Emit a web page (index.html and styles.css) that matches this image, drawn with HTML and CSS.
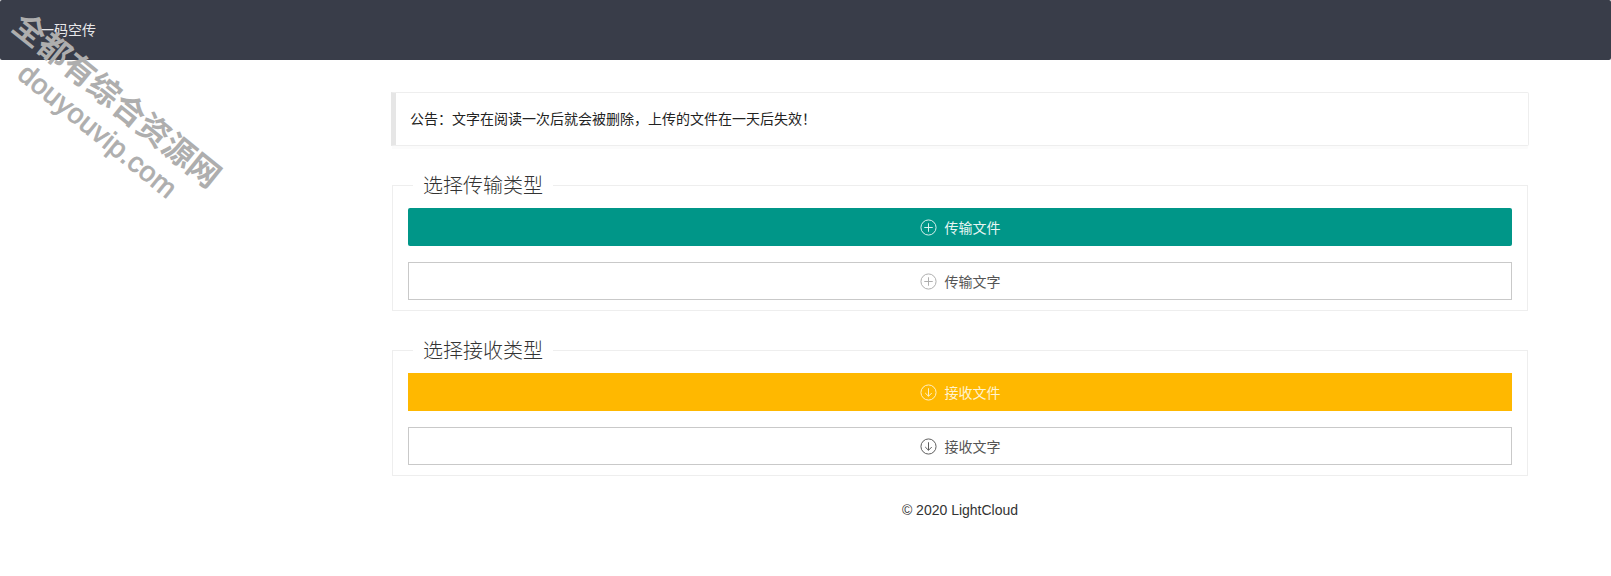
FILE: index.html
```html
<!DOCTYPE html>
<html lang="zh-CN">
    <head>
        <meta charset="utf-8">
        <title>一码空传</title>
        <link rel="stylesheet" href="styles.css">
    </head>
    <body>
    <div class="header">一码空传</div>
    <div class="main">
        <div class="notice">公告：文字在阅读一次后就会被删除，上传的文件在一天后失效！</div>
        <fieldset class="field">
            <legend>选择传输类型</legend>
            <div class="field-box">
                <button class="btn btn-green">
                    <svg class="icon" viewBox="0 0 18 18"><circle cx="9" cy="9" r="8"/><path d="M9 4.5v9M4.5 9h9"/></svg>
                    传输文件
                </button>
                <button class="btn btn-plain btn-faint">
                    <svg class="icon" viewBox="0 0 18 18"><circle cx="9" cy="9" r="8"/><path d="M9 4.5v9M4.5 9h9"/></svg>
                    传输文字
                </button>
            </div>
        </fieldset>
        <fieldset class="field">
            <legend>选择接收类型</legend>
            <div class="field-box">
                <button class="btn btn-yellow">
                    <svg class="icon" viewBox="0 0 18 18"><circle cx="9" cy="9" r="8"/><path d="M9 4.5v8.5M5.5 9.5 9 13l3.5-3.5"/></svg>
                    接收文件
                </button>
                <button class="btn btn-plain">
                    <svg class="icon" viewBox="0 0 18 18"><circle cx="9" cy="9" r="8"/><path d="M9 4.5v8.5M5.5 9.5 9 13l3.5-3.5"/></svg>
                    接收文字
                </button>
            </div>
        </fieldset>
        <div class="footer">© 2020 LightCloud</div>
    </div>
    <div class="watermark">
        <div class="mark-name">全都有综合资源网</div>
        <div class="mark-url">douyouvip.com</div>
    </div>
    </body>
</html>
```

FILE: styles.css
```css
body {
    margin: 0;
    background-color: #fff;
    color: #333;
    font-family: "Liberation Sans", "Noto Sans CJK SC", sans-serif;
    font-size: 14px;
}
.header {
    height: 60px;
    padding-left: 40px;
    background-color: #393d49;
    border-radius: 2px;
    color: #e8e8ea;
    line-height: 60px;
}
.main {
    width: 1138px;
    margin-left: 391px;
    padding-top: 32px;
}
.notice {
    height: 54px;
    box-sizing: border-box;
    padding-left: 14px;
    border: 1px solid #eee;
    border-left: 5px solid #e6e6e6;
    border-radius: 0 2px 2px 0;
    box-shadow: 0 4px 0 -1px #fbfbfb;
    color: #222;
    line-height: 52px;
    margin-bottom: 28px;
}
.field {
    width: 1136px;
    box-sizing: border-box;
    margin: 0 0 0 1px;
    padding: 0;
    border: 1px solid #eee;
}
.field + .field {
    margin-top: 28px;
}
.field legend {
    margin-left: 20px;
    padding: 0 10px;
    color: #333;
    font-size: 20px;
    font-weight: 300;
    line-height: 22px;
    transform: translateY(1px);
}
.field-box {
    display: flex;
    flex-direction: column;
    gap: 16px;
    padding: 12px 15px 10px;
}
.btn {
    display: flex;
    align-items: center;
    justify-content: center;
    gap: 8px;
    height: 38px;
    padding: 0;
    border: 0;
    border-radius: 2px;
    font-family: inherit;
    font-size: 14px;
}
.icon {
    width: 17px;
    height: 17px;
    fill: none;
    stroke: currentColor;
    stroke-width: 1;
}
.btn-green {
    background-color: #009688;
    color: #e6f5f3;
}
.btn-yellow {
    background-color: #ffb800;
    border-radius: 0;
    color: #fff3d0;
}
.btn-plain {
    background-color: #fff;
    border: 1px solid #c9c9c9;
    border-radius: 0;
    color: #555;
}
.btn-faint .icon {
    color: #aaa;
}
.footer {
    margin-top: 24px;
    text-align: center;
    color: #333;
    line-height: 20px;
}
/* site stamp across the top left corner */
.watermark {
    position: absolute;
    top: 3px;
    left: 31px;
    transform: rotate(39deg);
    transform-origin: 0 0;
    color: #aeaeae;
    white-space: nowrap;
    pointer-events: none;
}
.mark-name {
    font-family: "Noto Sans CJK SC", sans-serif;
    font-size: 32px;
    font-weight: 700;
    line-height: 38px;
}
.mark-url {
    margin-left: 35px;
    font-size: 28px;
    line-height: 40px;
    letter-spacing: 0.5px;
    -webkit-text-stroke: 0.8px #aeaeae;
}
```
